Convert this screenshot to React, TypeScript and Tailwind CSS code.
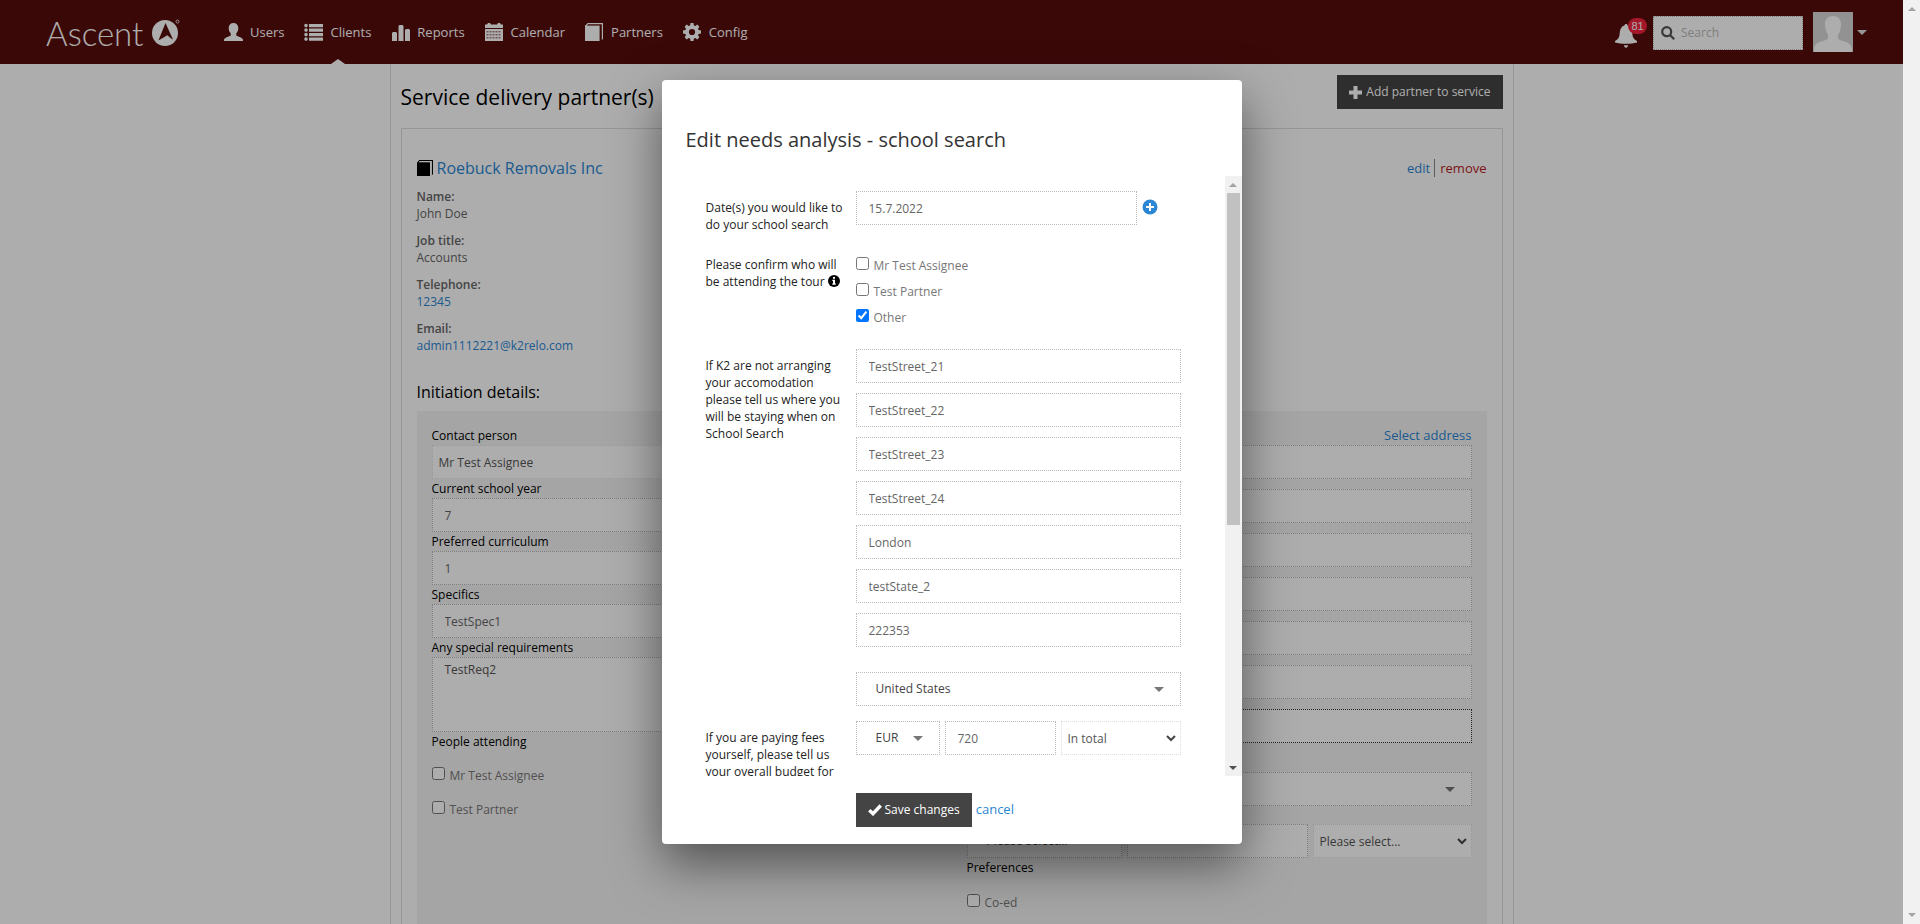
import type { ReactNode } from "react";

const field =
  "block h-[34px] w-full border border-dotted border-[#bbb] bg-white px-3 text-xs text-[#666] outline-none";

function Caret({ className = "" }: { className?: string }) {
  return (
    <svg viewBox="0 0 10 5" className={`pointer-events-none h-[5px] w-[10px] fill-[#777] ${className}`} aria-hidden="true">
      <path d="M0 0h10L5 5z" />
    </svg>
  );
}

function Chevron({ className = "" }: { className?: string }) {
  return (
    <svg viewBox="0 0 10 7" className={`pointer-events-none h-[7px] w-[10px] ${className}`} fill="none" stroke="#444" strokeWidth="2" aria-hidden="true">
      <path d="M1 1l4 4 4-4" />
    </svg>
  );
}

function BookIcon({ className }: { className: string }) {
  return (
    <svg viewBox="0 0 18 18" className={className} fill="currentColor" aria-hidden="true">
      <path d="M0 2.600h14.600V18H0z" />
      <path d="M0 3L2.500 0H18v16l-1.200 1V1.200H2.900L1.800 3z" />
    </svg>
  );
}

const icons: Record<string, ReactNode> = {
  Users: (
    <path d="M9.500 0c3 0 4.800 2 4.800 5 0 2-.7 4-2 5.200v2.300c0 .6 6.700 1.800 6.700 4.300V18H0v-1.200c0-2.500 6.700-3.700 6.700-4.300v-2.300C5.400 9 4.700 7 4.700 5c0-3 1.800-5 4.800-5z" />
  ),
  Clients: (
    <path d="M2 .8a1.800 1.800 0 1 1 0 3.600 1.800 1.800 0 0 1 0-3.600zM2 5.300a1.800 1.800 0 1 1 0 3.600 1.800 1.800 0 0 1 0-3.600zM2 9.800a1.800 1.800 0 1 1 0 3.600 1.800 1.800 0 0 1 0-3.600zM2 14.300a1.800 1.800 0 1 1 0 3.600 1.800 1.800 0 0 1 0-3.600zM5 1h14v3.200H5zM5 5.500h14v3.200H5zM5 10h14v3.200H5zM5 14.500h14v3.200H5z" />
  ),
  Reports: <path d="M1 10l1-1h3l1 1v8H1zM7.500 3l1-1h3l1 1v15h-5zM14 7l1-1h3l1 1v11h-5z" />,
  Calendar: (
    <g>
      <path d="M0 1.500h2L3 0h2l1 1.500h6L13 0h2l1 1.500h2V5H0zM0 6h18v12H0z" />
      <path d="M1.500 8.800h15M1.500 11.800h15M1.500 14.800h15" stroke="#580d0d" strokeWidth=".8" strokeDasharray="2 1" />
    </g>
  ),
  Config: (
    <path
      fillRule="evenodd"
      d="M7.500 0h3l.4 2.400 1.400.6 2-1.400 2.100 2.100-1.400 2 .6 1.400L18 7.500v3l-2.400.4-.6 1.400 1.400 2-2.100 2.100-2-1.400-1.400.6-.4 2.400h-3l-.4-2.400-1.400-.6-2 1.400-2.100-2.100 1.400-2-.6-1.400L0 10.500v-3l2.400-.4L3 5.700l-1.400-2 2.100-2.100 2 1.400 1.400-.6zM9 5.900a3.100 3.100 0 1 0 0 6.200 3.100 3.100 0 0 0 0-6.200z"
    />
  ),
};

const nav = ["Users", "Clients", "Reports", "Calendar", "Partners", "Config"];

function Header() {
  return (
    <header className="flex h-16 items-center bg-[#580d0d] pr-9 pl-[46px] text-white">
      <a href="#home" className="flex w-[134px] items-center justify-between pt-[2px]">
        <span className="font-['Lato'] text-[33px] leading-8 font-light">Ascent</span>
        <svg viewBox="0 0 28 28" className="h-7 w-7 shrink-0" aria-hidden="true">
          <circle cx="13" cy="14" r="13" fill="#fff" />
          <path d="M13.500 4L21 20.500l-6-3.200-8.500 4z" fill="#580d0d" />
          <path d="M8 20.800l7.200-4.600 4.200 3.400-4.600-1.800z" fill="#fff" />
          <circle cx="25.500" cy="2.500" r="1.500" fill="none" stroke="#fff" strokeWidth=".8" />
        </svg>
      </a>
      <nav className="ml-11 flex h-16 items-stretch gap-5">
        {nav.map((n) => (
          <a key={n} href={`#${n.toLowerCase()}`} className="relative flex items-center gap-[7px] text-[13px]">
            {n === "Partners" ? (
              <BookIcon className="mr-px h-[18px] w-[18px]" />
            ) : (
              <svg viewBox="0 0 19 18" className="h-[18px] w-[19px]" fill="currentColor" aria-hidden="true">
                {icons[n]}
              </svg>
            )}
            <span className="pt-[2px]">{n}</span>
            {n === "Clients" && (
              <svg viewBox="0 0 14 5" className="absolute bottom-0 left-1/2 h-[5px] w-[14px] -translate-x-1/2 fill-white" aria-hidden="true">
                <path d="M0 5l7-5 7 5z" />
              </svg>
            )}
          </a>
        ))}
      </nav>
      <div className="ml-auto flex items-center">
        <button type="button" aria-label="Notifications" className="relative mr-[15px] h-8 w-[23px]">
          <svg viewBox="0 0 22 24" className="mt-2 h-6 w-[22px] fill-white" aria-hidden="true">
            <path d="M11 0c1 0 1.500.7 1.500 1.500 3.500 1 4.500 4 4.800 8 .2 4 1.700 6 4.700 7.500v1.500c-3 1-7 1.300-11 1.300S3 19.500 0 18.500V17c3-1.500 4.500-3.500 4.700-7.500.3-4 1.300-7 4.800-8C9.500.7 10 0 11 0zM9 21.300h4c0 1.500-.8 2.500-2 2.500s-2-1-2-2.500z" />
          </svg>
          <span className="absolute top-[2px] left-[13px] flex h-4 w-[19px] items-center justify-center rounded-full bg-[#f0233c] font-['Liberation_Sans'] text-[11px]">
            81
          </span>
        </button>
        <label className="mt-[2px] flex h-[34px] w-[150px] items-center gap-[6px] border border-dotted border-[#bbb] bg-white px-[7px]">
          <svg viewBox="0 0 14 14" className="h-[14px] w-[14px] shrink-0" fill="none" stroke="#555" strokeWidth="2.200" aria-hidden="true">
            <circle cx="5.700" cy="5.700" r="4.500" />
            <path d="M9 9l4.200 4.200" />
          </svg>
          <input aria-label="Search" placeholder="Search" className="w-full min-w-0 bg-transparent text-xs outline-none placeholder:text-[#bbb]" />
        </label>
        <button type="button" aria-label="Account" className="ml-[10px] flex items-center gap-1">
          <svg viewBox="0 0 40 40" className="h-10 w-10" aria-hidden="true">
            <path d="M0 0h40v40H0z" fill="#d8d8d8" />
            <path d="M20 4c5 0 8 3 8 8 0 4-1 8-3 11v3c1 4 14 2 14 12v2H1v-2c0-10 13-8 14-12v-3c-2-3-3-7-3-11 0-5 3-8 8-8z" fill="#fff" />
          </svg>
          <svg viewBox="0 0 10 5" className="h-[5px] w-[10px] fill-[#ddd]" aria-hidden="true">
            <path d="M0 0h10L5 5z" />
          </svg>
        </button>
      </div>
    </header>
  );
}

function Check({ label, checked }: { label: string; checked?: boolean }) {
  return (
    <label className="flex h-[26px] items-center gap-[5px] pt-[2px] text-xs text-[#777]">
      <input type="checkbox" defaultChecked={checked} className="mb-[6px] h-[13px] w-[13px]" />
      {label}
    </label>
  );
}

function Field({ label, value }: { label: string; value: string }) {
  return (
    <label className="block text-xs leading-[19px] text-black">
      {label}
      <input defaultValue={value} className={field} />
    </label>
  );
}

function Detail({ label, children }: { label: string; children: ReactNode }) {
  return (
    <div>
      <dt className="font-semibold">{label}</dt>
      <dd>{children}</dd>
    </div>
  );
}

function Select({ label, value, native, className = "" }: { label: string; value: string; native?: boolean; className?: string }) {
  return (
    <span className={`relative block ${className}`}>
      <select
        aria-label={label}
        className={`block h-[34px] w-full appearance-none border border-dotted bg-white text-xs outline-none ${
          native ? "border-[#ddd] px-[6px] pt-[2px] text-[#555]" : "border-[#bbb] px-[19px] text-[#444]"
        }`}
      >
        <option>{value}</option>
      </select>
      {native ? <Chevron className="absolute top-[14px] right-[5px]" /> : <Caret className="absolute top-[15px] right-[17px]" />}
    </span>
  );
}

const addressLines = ["Street 1", "Street 2", "Street 3", "Street 4", "City", "State"];

function Page() {
  return (
    <main className="mx-auto min-h-0 w-full max-w-[1124px] flex-1 border-x border-[#ddd] px-[10px] pt-[11px]">
      <div className="flex items-start justify-between">
        <h1 className="pt-[6px] text-[21px] leading-8 text-black">Service delivery partner(s)</h1>
        <button type="button" className="flex h-[34px] items-center gap-1 bg-[#444] px-3 text-xs text-white">
          <svg viewBox="0 0 13 13" className="h-[13px] w-[13px] fill-white" aria-hidden="true">
            <path d="M4.500 0h4v4.500H13v4H8.500V13h-4V8.500H0v-4h4.500z" />
          </svg>
          Add partner to service
        </button>
      </div>
      <section className="mt-[15px] border border-[#ddd] px-[15px] pt-[27px]">
        <div className="flex items-center justify-between">
          <h2 className="flex items-center gap-1 text-base leading-6">
            <BookIcon className="h-4 w-4 text-black" />
            <a href="#partner" className="text-[#2b86d3]">
              Roebuck Removals Inc
            </a>
          </h2>
          <div className="flex items-center text-[13px] leading-[18px]">
            <a href="#edit" className="border-r border-[#888] pr-1 text-[#2b86d3]">
              edit
            </a>
            <a href="#remove" className="pl-[5px] text-[#b92222]">
              remove
            </a>
          </div>
        </div>
        <dl className="mt-2 flex flex-col gap-[10px] text-xs leading-[17px] text-[#666]">
          <Detail label="Name:">John Doe</Detail>
          <Detail label="Job title:">Accounts</Detail>
          <Detail label="Telephone:">
            <a href="tel:12345" className="text-[#2b86d3]">12345</a>
          </Detail>
          <Detail label="Email:">
            <a href="mailto:admin1112221@k2relo.com" className="text-[#2b86d3]">admin1112221@k2relo.com</a>
          </Detail>
        </dl>
        <h3 className="mt-[26px] text-base leading-6 text-black">Initiation details:</h3>
        <div className="mt-[7px] grid h-[600px] grid-cols-2 gap-[30px] bg-[#f4f4f4] px-[15px] pt-[15px]">
          <div>
            <p className="text-xs leading-[19px] text-black">Contact person</p>
            <Select label="Contact person" value="Mr Test Assignee" native />
            <Field label="Current school year" value="7" />
            <Field label="Preferred curriculum" value="1" />
            <Field label="Specifics" value="TestSpec1" />
            <label className="block text-xs leading-[19px] text-black">
              Any special requirements
              <textarea
                defaultValue="TestReq2"
                className="block h-[75px] w-full resize-none border border-dotted border-[#bbb] bg-white px-3 py-1 text-xs text-[#555] outline-none"
              />
            </label>
            <p className="text-xs leading-[19px] text-black">People attending</p>
            <div className="mt-[11px] flex flex-col gap-2">
              <Check label="Mr Test Assignee" />
              <Check label="Test Partner" />
            </div>
          </div>
          <div>
            <div className="text-right text-[13px] leading-[19px]">
              <a href="#address" className="text-[#2b86d3]">
                Select address
              </a>
            </div>
            <div className="flex flex-col gap-[10px]">
              {addressLines.map((a) => (
                <input key={a} aria-label={a} className={field} />
              ))}
              <input aria-label="Postcode" className="block h-[34px] w-full border border-dotted border-[#333] bg-white px-3 text-xs" />
            </div>
            <Select label="Country" value="" className="mt-[29px]" />
            <div className="mt-[18px] grid grid-cols-[155fr_181fr_159fr] gap-[5px]">
              <Select label="Currency" value="Please select..." />
              <input aria-label="Budget" className={field} />
              <Select label="Period" value="Please select..." native />
            </div>
            <p className="text-xs leading-[19px] text-black">Preferences</p>
            <div className="mt-3">
              <Check label="Co-ed" />
            </div>
          </div>
        </div>
      </section>
    </main>
  );
}

function Row({ label, children, className = "" }: { label: ReactNode; children: ReactNode; className?: string }) {
  return (
    <div className={`grid grid-cols-[141px_325px] gap-[9px] ${className}`}>
      <div className="pt-2 text-xs leading-[17px] text-[#222]">{label}</div>
      <div>{children}</div>
    </div>
  );
}

const address = ["TestStreet_21", "TestStreet_22", "TestStreet_23", "TestStreet_24", "London", "testState_2", "222353"];

function Modal() {
  return (
    <div role="dialog" aria-label="Edit needs analysis - school search" className="w-[580px] rounded bg-white shadow-[0_20px_50px_rgba(0,0,0,0.5)]">
      <h2 className="px-6 pt-[46px] pb-[22px] text-xl leading-7 text-[#333]">Edit needs analysis - school search</h2>
      <div className="flex h-[600px]">
        <div className="min-w-0 flex-1 overflow-hidden pt-[15px] pl-[44px]">
          <Row label="Date(s) you would like to do your school search">
            <div className="flex items-start gap-[5px]">
              <input aria-label="Date" defaultValue="15.7.2022" className={`${field} max-w-[281px]`} />
              <button type="button" aria-label="Add date" className="mt-2">
                <svg viewBox="0 0 16 16" className="block h-4 w-4" aria-hidden="true">
                  <circle cx="8" cy="8" r="7.500" fill="#2b86d3" />
                  <path d="M8 4v8M4 8h8" stroke="#fff" strokeWidth="2" />
                </svg>
              </button>
            </div>
          </Row>
          <Row
            className="mt-[15px]"
            label={
              <>
                Please confirm who will be attending the tour{" "}
                <svg viewBox="0 0 12 12" className="inline h-3 w-3 align-[-1px]" aria-hidden="true">
                  <circle cx="6" cy="6" r="6" fill="#000" />
                  <path d="M5 2h2v1.700H5zM4.300 4.800H7v3.700h.8v1.200H4.300V8.500H5V6h-.7z" fill="#fff" />
                </svg>
              </>
            }
          >
            <div className="pt-1">
              <Check label="Mr Test Assignee" />
              <Check label="Test Partner" />
              <Check label="Other" checked />
            </div>
          </Row>
          <Row
            className="mt-[19px]"
            label="If K2 are not arranging your accomodation please tell us where you will be staying when on School Search"
          >
            <div className="flex flex-col gap-[10px]">
              {address.map((a) => (
                <input key={a} aria-label="Address line" defaultValue={a} className={field} />
              ))}
              <Select label="Country" value="United States" className="mt-[15px]" />
            </div>
          </Row>
          <Row className="mt-[15px]" label="If you are paying fees yourself, please tell us your overall budget for school fees">
            <div className="grid grid-cols-[84px_1fr_120px] gap-[5px]">
              <Select label="Currency" value="EUR" />
              <input aria-label="Budget" defaultValue="720" className={field} />
              <Select label="Period" value="In total" native />
            </div>
          </Row>
        </div>
        <div className="flex w-[17px] flex-col items-center bg-[#f1f1f1]" aria-hidden="true">
          <div className="flex h-[17px] shrink-0 items-center">
            <svg viewBox="0 0 8 4" className="h-1 w-2 fill-[#a3a3a3]">
              <path d="M0 4h8L4 0z" />
            </svg>
          </div>
          <div className="h-[332px] w-[13px] bg-[#c1c1c1]" />
          <div className="mt-auto flex h-[17px] shrink-0 items-center">
            <svg viewBox="0 0 8 4" className="h-1 w-2 fill-[#505050]">
              <path d="M0 0h8L4 4z" />
            </svg>
          </div>
        </div>
      </div>
      <div className="flex items-center gap-1 py-[17px] pl-[194px]">
        <button type="button" className="flex h-[34px] items-center gap-[3px] bg-[#444] px-3 text-xs text-white">
          <svg viewBox="0 0 14 12" className="h-3 w-[14px]" fill="none" stroke="#fff" strokeWidth="3.400" aria-hidden="true">
            <path d="M1.300 6.200L5 9.700 12.700 1.500" />
          </svg>
          Save changes
        </button>
        <a href="#cancel" className="text-[13px] text-[#2b86d3]">
          cancel
        </a>
      </div>
    </div>
  );
}

export default function App() {
  return (
    <div className="flex h-screen overflow-hidden bg-white font-['Open_Sans',sans-serif]">
      <div className="relative flex min-w-0 flex-1 flex-col overflow-hidden">
        <Header />
        <Page />
        <div className="absolute inset-0 flex items-start justify-center bg-black/32 pt-20">
          <Modal />
        </div>
      </div>
      <div className="flex w-[17px] shrink-0 flex-col items-center justify-between bg-[#f1f1f1] py-[7px]" aria-hidden="true">
        <svg viewBox="0 0 8 4" className="h-1 w-2 fill-[#a3a3a3]">
          <path d="M0 4h8L4 0z" />
        </svg>
        <svg viewBox="0 0 8 4" className="h-1 w-2 fill-[#a3a3a3]">
          <path d="M0 0h8L4 4z" />
        </svg>
      </div>
    </div>
  );
}
